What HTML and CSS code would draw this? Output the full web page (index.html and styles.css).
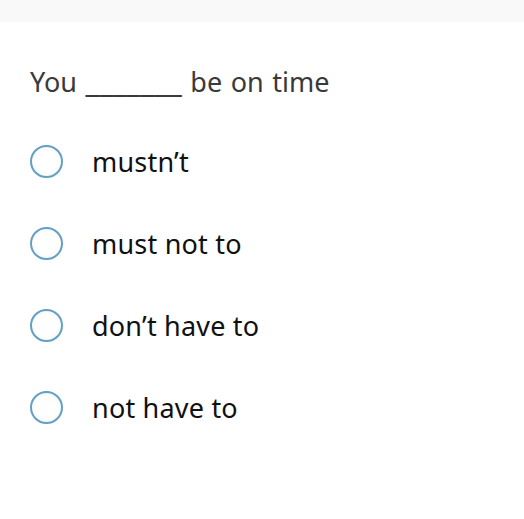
FILE: index.html
```html
<!DOCTYPE html>
<html lang="en">
<head>
    <meta charset="UTF-8">
    <meta name="viewport" content="width=device-width, initial-scale=1.0">
    <title>Quiz</title>
    <link rel="stylesheet" href="styles.css">
</head>
<body>
    <div class="top-bar"></div>
    <div class="quiz">
        <p class="question">You <span class="blank">_______</span> be on time</p>
        <div class="options">
            <label class="option"><span class="radio"></span>mustn’t</label>
            <label class="option"><span class="radio"></span>must not to</label>
            <label class="option"><span class="radio"></span>don’t have to</label>
            <label class="option"><span class="radio"></span>not have to</label>
        </div>
    </div>
</body>
</html>
```

FILE: styles.css
```css
body {
    margin: 0;
    background: #fff;
    font-family: 'Noto Sans', 'Open Sans', sans-serif;
}

.top-bar {
    height: 22px;
    background: #f9f9f9;
}

.quiz {
    padding: 38px 30px 0 30px;
}

.question {
    margin: 0;
    font-size: 27px;
    line-height: 44px;
    word-spacing: 1.5px;
    color: #3a3a3a;
}

.blank {
    font-size: 31px;
    line-height: 1;
}

.options {
    display: flex;
    flex-direction: column;
    gap: 46px;
    margin-top: 39px;
}

.option {
    display: flex;
    align-items: center;
    height: 36px;
    font-size: 27px;
    letter-spacing: 0.2px;
    color: #111;
}

.radio {
    width: 29px;
    height: 29px;
    border: 2px solid #62a0c6;
    border-radius: 50%;
    background: radial-gradient(circle, #fff 45%, #f4f3ef 100%);
    margin-right: 29px;
    flex-shrink: 0;
}
```
